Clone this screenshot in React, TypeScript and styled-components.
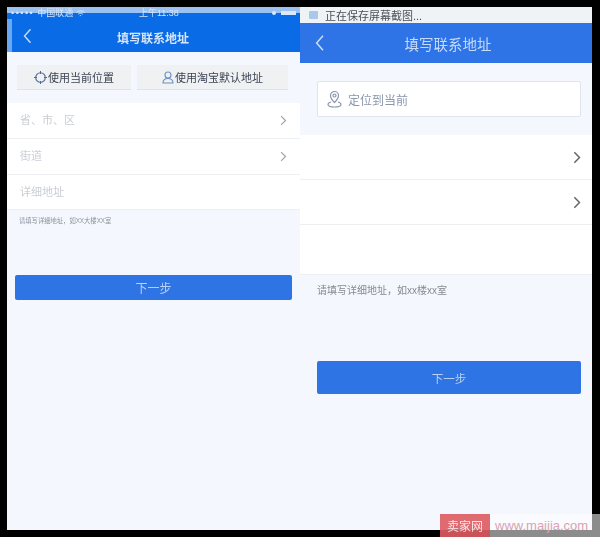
import React from 'react';
import styled, { createGlobalStyle } from 'styled-components';

const GlobalStyle = createGlobalStyle`
  html, body {
    margin: 0;
    padding: 0;
    background: #000;
  }
  body {
    font-family: "Liberation Sans", "Noto Sans CJK SC", sans-serif;
  }
`;

const Page = styled.div`
  width: 600px;
  height: 537px;
  box-sizing: border-box;
  padding: 7px 8px 7px 7px;
  background: #000;
  position: relative;
  overflow: hidden;
`;

const Frame = styled.div`
  height: 523px;
  display: grid;
  grid-template-columns: 293px 292px;
  background: #f4f7fe;
  filter: blur(0.6px);
`;

const Phone = styled.div`
  display: flex;
  flex-direction: column;
  min-width: 0;
  background: #f4f7fe;
`;

const LeftTop = styled.div`
  height: 45px;
  background: linear-gradient(#9cc2f2 0, #9cc2f2 6px, #0a6be6 6px);
  display: flex;
  flex-direction: column;
`;

const LeftStatus = styled.div`
  height: 12px;
  color: #d7e6fb;
  font-size: 9px;
  line-height: 12px;
  display: grid;
  grid-template-columns: 128px 1fr auto;
  padding: 0 4px;
  white-space: nowrap;
`;

const Carrier = styled.span`
  display: flex;
  align-items: center;
  gap: 3px;
`;

const SignalDots = styled.span`
  letter-spacing: 1.5px;
`;

const StatusIcons = styled.span`
  display: flex;
  align-items: center;
  gap: 5px;
`;

const StatusDot = styled.i`
  width: 4px;
  height: 4px;
  border-radius: 50%;
  background: #dbe8fb;
`;

const Battery = styled.i`
  width: 15px;
  height: 4px;
  background: #dbe8fb;
`;

const HeaderRow = styled.div<{ $size: number; $shiftLeft: number; $shiftRight: number; $top: number }>`
  flex: 1;
  display: flex;
  align-items: center;
  justify-content: center;
  position: relative;
  color: ${p => (p.$size > 13 ? '#c6dafa' : '#d5e5fb')};
  font-size: ${p => p.$size}px;
  font-weight: ${p => (p.$size > 13 ? 400 : 700)};
  padding-left: ${p => p.$shiftLeft}px;
  padding-right: ${p => p.$shiftRight}px;
  padding-top: ${p => p.$top}px;
  border-left: ${p => (p.$size > 13 ? 0 : 5)}px solid #6aa8f2;
`;

const BackIcon = styled.svg<{ $left: number }>`
  position: absolute;
  left: ${p => p.$left}px;
  top: 50%;
  transform: translateY(-50%);
`;

const ButtonBar = styled.div`
  display: grid;
  grid-template-columns: 114px 151px;
  gap: 6px;
  padding: 13px 0 13px 10px;
`;

const LocateButton = styled.div`
  height: 25px;
  background: #f0f1f3;
  border-bottom: 1px solid #dfe2e8;
  box-sizing: border-box;
  display: flex;
  align-items: center;
  justify-content: center;
  gap: 1px;
  font-size: 11px;
  color: #3c4454;
`;

const RowList = styled.div`
  display: flex;
  flex-direction: column;
`;

const Row = styled.div<{ $height: number; $right: number }>`
  height: ${p => p.$height}px;
  background: #fff;
  display: flex;
  align-items: center;
  justify-content: space-between;
  padding: 0 ${p => p.$right}px 0 13px;
  border-bottom: 1px solid #edeff3;
  box-sizing: border-box;
`;

const RowLabel = styled.span`
  font-size: 11px;
  line-height: 11px;
  color: #c9cdd2;
`;

const Hint = styled.div<{ $size: number; $color: string; $top: number; $left: number }>`
  font-size: ${p => p.$size}px;
  color: ${p => p.$color};
  margin-top: ${p => p.$top}px;
  padding-left: ${p => p.$left}px;
  line-height: 12px;
`;

const NextButton = styled.div<{ $height: number; $top: number; $left: number; $width: number; $size: number }>`
  width: ${p => p.$width}px;
  height: ${p => p.$height}px;
  margin: ${p => p.$top}px 0 0 ${p => p.$left}px;
  background: #2f74e4;
  border-radius: 2px;
  color: #b9d2f6;
  font-size: ${p => p.$size}px;
  display: flex;
  align-items: center;
  justify-content: center;
`;

const RightNotice = styled.div`
  height: 16px;
  background: #f0f3f6;
  display: flex;
  align-items: center;
  gap: 7px;
  padding-left: 9px;
  font-size: 11px;
  color: #4a4f57;
`;

const NoticeIcon = styled.span`
  width: 9px;
  height: 8px;
  background: #a9c8ea;
  border-radius: 1px;
`;

const RightTop = styled.div`
  height: 40px;
  background: #2f74e6;
  display: flex;
`;

const LocateBox = styled.div`
  margin: 18px 11px 18px 17px;
  height: 36px;
  background: #fff;
  border: 1px solid #dfe4ee;
  border-radius: 2px;
  box-sizing: border-box;
  display: flex;
  align-items: center;
  gap: 6px;
  padding-left: 9px;
  font-size: 12px;
  color: #8b97ac;
`;

const Watermark = styled.div`
  position: absolute;
  right: 0;
  bottom: 0;
  width: 160px;
  height: 23px;
  display: flex;
  align-items: center;
  background: rgba(255, 255, 255, 0.55);
  font-size: 12px;
`;

const WatermarkBadge = styled.span`
  width: 50px;
  height: 100%;
  background: #d9464c;
  opacity: 0.8;
  color: #fbe3e3;
  display: flex;
  align-items: center;
  justify-content: center;
  margin-right: 5px;
`;

const WatermarkUrl = styled.span`
  color: #d9a2b2;
  font-size: 13px;
`;

const Chevron = ({ color, size }: { color: string; size: number }) => (
  <svg width={size * 0.6} height={size} viewBox="0 0 6 10" fill="none">
    <path d="M1 1l4 4-4 4" stroke={color} strokeWidth="1.1" />
  </svg>
);

const Back = ({ left, h }: { left: number; h: number }) => (
  <BackIcon $left={left} width={h * 0.6} height={h} viewBox="0 0 6 10" fill="none">
    <path d="M5 .5L1 5l4 4.5" stroke="#cfe0fa" strokeWidth="0.9" />
  </BackIcon>
);

const App = () => (
  <>
    <GlobalStyle />
    <Page>
      <Frame>
        <Phone>
          <LeftTop>
            <LeftStatus>
              <Carrier>
                <SignalDots>•••••</SignalDots>
                <span>中国联通</span>
                <svg width="9" height="7" viewBox="0 0 9 7" fill="none" stroke="#d7e6fb">
                  <path d="M.5 2.500a5.500 5.500 0 0 1 8 0M2.200 4.200a3 3 0 0 1 4.600 0M3.800 5.800a1 1 0 0 1 1.400 0" />
                </svg>
              </Carrier>
              <span>上午11:38</span>
              <StatusIcons>
                <StatusDot />
                <Battery />
              </StatusIcons>
            </LeftStatus>
            <HeaderRow $size={12} $shiftLeft={0} $shiftRight={6} $top={3}>
              <Back left={11} h={15} />
              填写联系地址
            </HeaderRow>
          </LeftTop>
          <ButtonBar>
            <LocateButton>
              <svg width="13" height="13" viewBox="0 0 13 13" fill="none" stroke="#4b6a9c">
                <circle cx="6.5" cy="6.5" r="4.8" strokeWidth="1.1" />
                <path d="M6.5 0v3M6.5 10v3M0 6.5h3M10 6.5h3" strokeWidth="1" />
              </svg>
              使用当前位置
            </LocateButton>
            <LocateButton>
              <svg width="12" height="13" viewBox="0 0 12 13" fill="none" stroke="#6e90c8">
                <circle cx="6" cy="4" r="3" strokeWidth="1.1" />
                <path d="M1 12c0-3 2-4.500 5-4.500s5 1.500 5 4.500z" strokeWidth="1.1" />
              </svg>
              使用淘宝默认地址
            </LocateButton>
          </ButtonBar>
          <RowList>
            <Row $height={36} $right={13}>
              <RowLabel>省、市、区</RowLabel>
              <Chevron color="#a0a4aa" size={11} />
            </Row>
            <Row $height={36} $right={13}>
              <RowLabel>街道</RowLabel>
              <Chevron color="#a0a4aa" size={11} />
            </Row>
            <Row $height={35} $right={13}>
              <RowLabel>详细地址</RowLabel>
            </Row>
          </RowList>
          <Hint $size={6.3} $color="#8a919c" $top={5} $left={12}>
            请填写详细地址，如XX大楼XX室
          </Hint>
          <NextButton $width={277} $height={25} $top={48} $left={8} $size={12}>
            下一步
          </NextButton>
        </Phone>
        <Phone>
          <RightNotice>
            <NoticeIcon />
            正在保存屏幕截图...
          </RightNotice>
          <RightTop>
            <HeaderRow $size={14.5} $shiftLeft={4} $shiftRight={0} $top={0}>
              <Back left={15} h={16} />
              填写联系地址
            </HeaderRow>
          </RightTop>
          <LocateBox>
            <svg width="15" height="18" viewBox="0 0 15 18" fill="none" stroke="#8b97ac" strokeWidth="1.2">
              <path d="M7.500 12.500C5 10 3.500 8 3.500 5.500a4 4 0 0 1 8 0c0 2.500-1.500 4.500-4 7z" />
              <circle cx="7.500" cy="5.500" r="1.500" />
              <path d="M4 12c-2 .5-3 1.500-3 2.500 0 1.500 3 2.500 6.500 2.500s6.500-1 6.500-2.500c0-1-1-2-3-2.500" />
            </svg>
            定位到当前
          </LocateBox>
          <RowList>
            <Row $height={45} $right={11}>
              <span />
              <Chevron color="#5f6368" size={13} />
            </Row>
            <Row $height={45} $right={11}>
              <span />
              <Chevron color="#5f6368" size={13} />
            </Row>
            <Row $height={50} $right={11} />
          </RowList>
          <Hint $size={10} $color="#858a92" $top={10} $left={17}>
            请填写详细地址，如xx楼xx室
          </Hint>
          <NextButton $width={264} $height={33} $top={64} $left={17} $size={11.5}>
            下一步
          </NextButton>
        </Phone>
      </Frame>
      <Watermark>
        <WatermarkBadge>卖家网</WatermarkBadge>
        <WatermarkUrl>www.maijia.com</WatermarkUrl>
      </Watermark>
    </Page>
  </>
);

export default App;
